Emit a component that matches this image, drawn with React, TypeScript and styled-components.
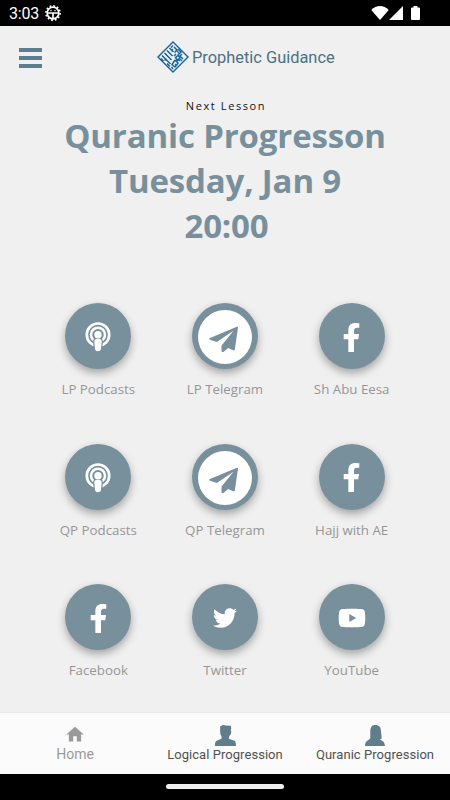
import React from "react";
import styled, { createGlobalStyle } from "styled-components";
import { FaFacebookF, FaTwitter, FaYoutube } from "react-icons/fa";

const GlobalStyle = createGlobalStyle`
  * { box-sizing: border-box; }
  body { margin: 0; background: #f0f0f0; }
`;

const Screen = styled.div`
  width: 450px;
  height: 800px;
  display: flex;
  flex-direction: column;
  overflow: hidden;
  background: #f0f0f0;
  font-family: "Open Sans", "Noto Sans", sans-serif;
`;

const StatusBar = styled.div`
  height: 26px;
  flex: none;
  background: #000;
  color: #fff;
  display: flex;
  align-items: center;
  justify-content: space-between;
  padding: 0 30px 0 9px;
  font: 400 16px/26px Roboto, sans-serif;
`;

const StatusGroup = styled.div<{ $gap: number }>`
  display: flex;
  align-items: center;
  gap: ${(p) => p.$gap}px;
  svg { display: block; }
`;

const Clock = styled.span`
  letter-spacing: -0.2px;
  padding-top: 2px;
`;

const BatterySlot = styled.span`
  margin-left: 8px;
`;

const Header = styled.header`
  height: 62px;
  flex: none;
  display: grid;
  grid-template-columns: 157px auto 1fr;
  align-items: center;
`;

const MenuButton = styled.button`
  border: 0;
  background: none;
  padding: 0;
  margin: 2px 0 0 19px;
  width: 23px;
  display: flex;
  flex-direction: column;
  gap: 4.500px;
`;

const MenuLine = styled.span`
  height: 3.500px;
  width: 23px;
  background: #5d7e8e;
`;

const Brand = styled.div`
  display: flex;
  align-items: center;
  gap: 3px;
  color: #4c7182;
  font: 400 16.400px/20px Roboto, sans-serif;
  svg { display: block; }
`;

const BrandName = styled.span`
  padding-top: 2px;
`;

const Lesson = styled.section`
  height: 215px;
  flex: none;
  padding-top: 10px;
  text-align: center;
`;

const LessonCaption = styled.div`
  font-size: 11px;
  line-height: 15px;
  letter-spacing: 1.6px;
  padding-left: 2px;
  color: #111;
`;

const LessonTitle = styled.h1`
  margin: 0;
  font-size: 33px;
  line-height: 45px;
  letter-spacing: -0.15px;
  font-weight: 700;
  color: #78909c;
`;

const TitleTime = styled.span`
  padding-left: 3px;
`;

const LinkGrid = styled.main`
  flex: 1;
  min-height: 0;
  display: grid;
  grid-template-columns: repeat(3, 126.7px);
  grid-auto-rows: 140.7px;
  justify-content: center;
`;

const LinkItem = styled.div`
  display: flex;
  flex-direction: column;
  align-items: center;
`;

const Disc = styled.div`
  width: 66px;
  height: 66px;
  padding-top: 2px;
  border-radius: 50%;
  background: #78909c;
  color: #fff;
  display: flex;
  align-items: center;
  justify-content: center;
  box-shadow: 0 4px 9px rgba(0, 0, 0, 0.32);
  svg { display: block; }
`;

const LinkLabel = styled.div`
  margin-top: 11px;
  font-size: 13.300px;
  line-height: 18px;
  color: #969696;
  white-space: nowrap;
`;

const TabBar = styled.nav`
  height: 62px;
  flex: none;
  display: grid;
  grid-template-columns: repeat(3, 1fr);
  background: #fbfbfb;
  border-top: 1px solid #e8e8e8;
`;

const Tab = styled.div<{ $active?: boolean }>`
  display: flex;
  flex-direction: column;
  align-items: center;
  padding-top: ${(p) => (p.$active ? 11 : 12)}px;
  white-space: nowrap;
  color: ${(p) => (p.$active ? "#9a9a9a" : "#505050")};
  font: 400 ${(p) => (p.$active ? 14 : 13)}px/18px Roboto, sans-serif;
  letter-spacing: ${(p) => (p.$active ? 0 : 0.05)}px;
  svg { display: block; }
`;

const GestureBar = styled.div`
  height: 26px;
  flex: none;
  background: #000;
  display: flex;
  justify-content: center;
  padding-top: 10px;
`;

const GestureHandle = styled.span`
  width: 118px;
  height: 5px;
  border-radius: 3px;
  background: #eee;
`;

const DebugIcon = () => (
  <svg width="16" height="16" viewBox="0 0 16 16" fill="none" stroke="#fff">
    <circle cx="8" cy="8" r="7.1" strokeWidth="1.6" strokeDasharray="1.8 1.92" />
    <circle cx="8" cy="8" r="5.8" strokeWidth="1.7" />
    <path d="M2.500 8h11M8 8v5.500" strokeWidth="1.7" />
    <path d="M5 5.700h2M9 5.700h2" strokeWidth="0.8" />
  </svg>
);

const WifiIcon = () => (
  <svg width="18" height="14" viewBox="0 0 18 14" fill="#fff">
    <path d="M.3 4C5.200-1.300 12.800-1.300 17.700 4L9 14z" />
  </svg>
);

const SignalIcon = () => (
  <svg width="14" height="14" viewBox="0 0 14 14" fill="#fff">
    <path d="M14 0v14H0z" />
  </svg>
);

const BatteryIcon = () => (
  <svg width="9" height="14" viewBox="0 0 9 14" fill="#fff">
    <path d="M2.500 0h4v1.500H8a1 1 0 0 1 1 1V13a1 1 0 0 1-1 1H1a1 1 0 0 1-1-1V2.500a1 1 0 0 1 1-1h1.500z" />
  </svg>
);

const LogoMark = () => (
  <svg width="32" height="32" viewBox="0 0 32 32" fill="none" stroke="#17639a" strokeWidth="1.5">
    <path d="M16 1L31 16 16 31 1 16z" strokeWidth="1.4" />
    <path d="M5 14.500l8.500 8.500M7.500 12l7 7M10 9.500l5.500 5.500M4 17.500l2.500 2.500M10 22.500l3 3M12.500 7l4 4" />
    <path d="M16 4.500l-2 2M17 6l3 3-2.500 2.500M21 8l3 3-3 3M25 13l-2 2 3 3M19 13l-2 2" />
    <path d="M18.500 16.500l2.500-2 2 2-2.500 3zM18 19l3 3-3 4-3-2.500 3-4.500M16 28l-1.500-2M23 20l-2-2M9.500 18l-2 1.500" />
    <path d="M14 10l2-2M22 12l-2-2M25 20l-2-2M20 25l-2-2" stroke="#087fc0" />
  </svg>
);

const PodcastIcon = () => (
  <svg width="26" height="30" viewBox="0 0 26 30" fill="none" stroke="#fff">
    <circle cx="13" cy="12.700" r="11.200" strokeWidth="2.700" />
    <circle cx="13" cy="12.700" r="7" strokeWidth="2.500" />
    <path
      d="M13 16.200c2.800 0 4.500 1.100 4.300 3.800l-.7 6.600c-.2 2.200-1 3.200-3.600 3.200s-3.400-1-3.600-3.200l-.7-6.600c-.2-2.700 1.500-3.800 4.300-3.800z"
      fill="#fff"
      stroke="#78909c"
      strokeWidth="1.200"
    />
    <circle cx="13" cy="12.700" r="3.700" fill="#fff" stroke="none" />
  </svg>
);

const TelegramIcon = () => (
  <svg width="54" height="54" viewBox="0 0 54 54">
    <circle cx="27" cy="27" r="27" fill="#fff" />
    <path
      d="M38.900 16.800c.7-.4 1.300.1 1.100.9l-3.200 21.700c-.1.900-.8 1.300-1.600.9l-5.200-2.300-3.900 3.500c-1.200 1-2.600.7-2.600-.7v-4.600c0-.5.2-.9.500-1.300L35.500 20.700 18.800 32.100l-6.700-2.400c-1.300-.4-1.300-1.100-.1-1.600z"
      fill="#78909c"
    />
  </svg>
);

const HomeIcon = () => (
  <svg width="22" height="21" viewBox="0 0 24 24" fill="currentColor">
    <path d="M10 20v-6h4v6h5v-8h3L12 3 2 12h3v8z" />
  </svg>
);

const ManIcon = () => (
  <svg width="21" height="21" viewBox="0 0 21 21" fill="#607d8b">
    <path d="M5.200 1.200L8 0l3 .6 4.800.1.400 2.300-.4 3 .5.400-.5 2.900-.9.800-1 2.200v1.400l5.400 2c1.200.5 1.700 2.300 1.700 5.300H0c0-3.200.4-4.800 1.700-5.300l4.800-2v-2.100L5.500 9.600l-.4-3.200z" />
  </svg>
);

const WomanIcon = () => (
  <svg width="20" height="21" viewBox="0 0 20 21" fill="#607d8b">
    <path d="M10.300 0c4 0 5.700 2.300 5.700 6.500l.7 7-1.700 1 2.500 1.500c1.100.6 2 2 2.500 5H0c.2-3 .7-4.300 2-5l3.300-2.500V6C5.500 2 7 0 10.300 0z" />
  </svg>
);

const icons = {
  podcast: <PodcastIcon />,
  telegram: <TelegramIcon />,
  facebook: <FaFacebookF size={29} />,
  twitter: <FaTwitter size={24} />,
  youtube: <FaYoutube size={28} />,
};

const links: { icon: keyof typeof icons; label: string }[] = [
  { icon: "podcast", label: "LP Podcasts" },
  { icon: "telegram", label: "LP Telegram" },
  { icon: "facebook", label: "Sh Abu Eesa" },
  { icon: "podcast", label: "QP Podcasts" },
  { icon: "telegram", label: "QP Telegram" },
  { icon: "facebook", label: "Hajj with AE" },
  { icon: "facebook", label: "Facebook" },
  { icon: "twitter", label: "Twitter" },
  { icon: "youtube", label: "YouTube" },
];

export default function App() {
  return (
    <Screen>
      <GlobalStyle />
      <StatusBar>
        <StatusGroup $gap={6}>
          <Clock>3:03</Clock>
          <DebugIcon />
        </StatusGroup>
        <StatusGroup $gap={0}>
          <WifiIcon />
          <SignalIcon />
          <BatterySlot>
            <BatteryIcon />
          </BatterySlot>
        </StatusGroup>
      </StatusBar>
      <Header>
        <MenuButton aria-label="Menu">
          <MenuLine />
          <MenuLine />
          <MenuLine />
        </MenuButton>
        <Brand>
          <LogoMark />
          <BrandName>Prophetic Guidance</BrandName>
        </Brand>
      </Header>
      <Lesson>
        <LessonCaption>Next Lesson</LessonCaption>
        <LessonTitle>
          Quranic Progresson
          <br />
          Tuesday, Jan 9
          <br />
          <TitleTime>20:00</TitleTime>
        </LessonTitle>
      </Lesson>
      <LinkGrid>
        {links.map((link) => (
          <LinkItem key={link.label}>
            <Disc>{icons[link.icon]}</Disc>
            <LinkLabel>{link.label}</LinkLabel>
          </LinkItem>
        ))}
      </LinkGrid>
      <TabBar>
        <Tab $active>
          <HomeIcon />
          Home
        </Tab>
        <Tab>
          <ManIcon />
          Logical Progression
        </Tab>
        <Tab>
          <WomanIcon />
          Quranic Progression
        </Tab>
      </TabBar>
      <GestureBar>
        <GestureHandle />
      </GestureBar>
    </Screen>
  );
}
